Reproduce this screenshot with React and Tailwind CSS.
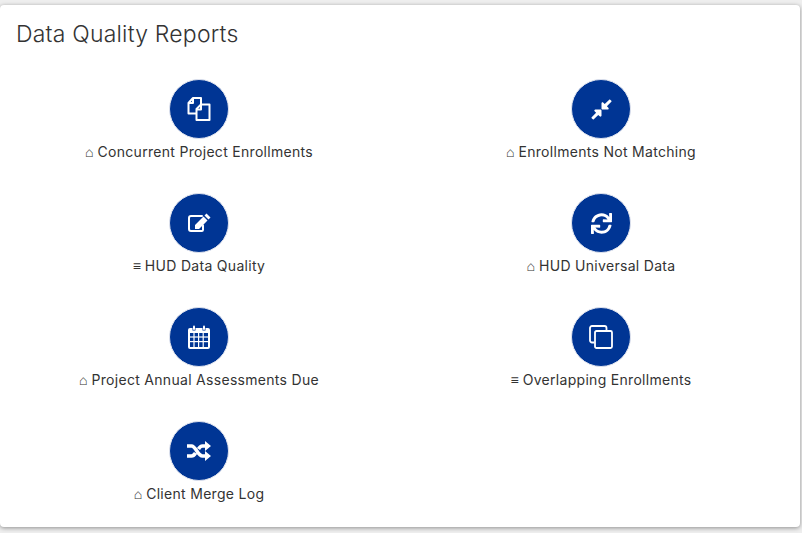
import React from 'react';
import { FaCompressAlt, FaSync } from 'react-icons/fa';

const FilesIcon = () => (
  <svg width="24" height="24" viewBox="0 0 24 24" fill="none" stroke="currentColor" strokeWidth="2" strokeLinejoin="round">
    <path d="M9 16.500H1.500V6L6 1h8v6" />
    <path d="M6 1.500V6H1.500" />
    <path d="M9.500 23V12L14 7.500h8.500V23z" />
    <path d="M14 8v4.500H9.500" />
  </svg>
);

const EditIcon = () => (
  <svg width="24" height="20" viewBox="0 0 24 20">
    <path d="M16 12.500v4.300a1.400 1.400 0 0 1-1.200 1.200H4a2 2 0 0 1-2-2V5a2 2 0 0 1 2-2h11" fill="none" stroke="currentColor" strokeWidth="2" strokeLinecap="round" />
    <path d="M19.500 0.500l4 4-2 2-4-4zM16.500 3.500l4 4-8.500 8.500H8v-4z" fill="currentColor" />
  </svg>
);

const CalendarIcon = () => (
  <svg width="22" height="24" viewBox="0 0 22 24">
    <path fill="currentColor" d="M2 3h2.500v2.500h3V3h7v2.500h3V3H20a2 2 0 0 1 2 2v17a2 2 0 0 1-2 2H2a2 2 0 0 1-2-2V5a2 2 0 0 1 2-2z" />
    <rect x="5" y="0.500" width="2" height="4.500" rx="1" fill="currentColor" />
    <rect x="15" y="0.500" width="2" height="4.500" rx="1" fill="currentColor" />
    <g fill="#003594">
      <rect x="2" y="8" width="3.400" height="3.400" />
      <rect x="6.600" y="8" width="3.400" height="3.400" />
      <rect x="11.200" y="8" width="3.400" height="3.400" />
      <rect x="15.800" y="8" width="4.200" height="3.400" />
      <rect x="2" y="12.600" width="3.400" height="3.400" />
      <rect x="6.600" y="12.600" width="3.400" height="3.400" />
      <rect x="11.200" y="12.600" width="3.400" height="3.400" />
      <rect x="15.800" y="12.600" width="4.200" height="3.400" />
      <rect x="2" y="17.200" width="3.400" height="4.800" />
      <rect x="6.600" y="17.200" width="3.400" height="4.800" />
      <rect x="11.200" y="17.200" width="3.400" height="4.800" />
      <rect x="15.800" y="17.200" width="4.200" height="4.800" />
    </g>
  </svg>
);

const CloneIcon = () => (
  <svg width="24" height="24" viewBox="0 0 24 24" fill="none" stroke="currentColor" strokeWidth="1.800">
    <path d="M5.500 17.500H3a2 2 0 0 1-2-2V3a2 2 0 0 1 2-2h12.500a2 2 0 0 1 2 2v2.500" />
    <rect x="6" y="6" width="17" height="17" rx="1.500" />
  </svg>
);

const RandomIcon = () => (
  <svg width="24" height="20" viewBox="0 0 24 20">
    <path d="M0 5h4.500c4.500 0 6 10 11 10H19M0 15h4.500c1.800 0 3-1.400 4-3M11.500 8c1-1.700 2.200-3 4-3H19" fill="none" stroke="currentColor" strokeWidth="3.600" />
    <path d="M18 0l6 5-6 5zM18 10l6 5-6 5z" fill="currentColor" />
  </svg>
);

const reports = [
  { name: 'Concurrent Project Enrollments', mark: '⌂', icon: <FilesIcon /> },
  { name: 'Enrollments Not Matching', mark: '⌂', icon: <FaCompressAlt className="text-[23px]" /> },
  { name: 'HUD Data Quality', mark: '≡', icon: <EditIcon /> },
  { name: 'HUD Universal Data', mark: '⌂', icon: <FaSync className="text-[21px]" /> },
  { name: 'Project Annual Assessments Due', mark: '⌂', icon: <CalendarIcon /> },
  { name: 'Overlapping Enrollments', mark: '≡', icon: <CloneIcon /> },
  { name: 'Client Merge Log', mark: '⌂', icon: <RandomIcon /> },
];

function ReportLink({ name, mark, icon }) {
  return (
    <a href="#" className="flex h-[114px] flex-col items-center">
      <span className="flex h-[60px] w-[60px] items-center justify-center rounded-full border border-[#dfe3ee] bg-[#003594] text-white">
        {icon}
      </span>
      <span className="mt-[2px] flex items-center gap-[4px] text-[14px] leading-[21px] tracking-[0.3px] text-[#333]">
        <span className="text-[14px] tracking-normal">{mark}</span>
        {name}
      </span>
    </a>
  );
}

export default function App() {
  return (
    <div className="h-[533px] overflow-hidden bg-[#eeeeee] pt-[5px] pr-[2px] font-['Inter','Liberation_Sans',sans-serif]">
      <div className="h-[522px] rounded-[4px] bg-white shadow-[0_1px_4px_rgba(0,0,0,0.4)]">
        <h2 className="pl-4 pt-[14px] text-[23px] leading-[30px] font-light tracking-[0.2px] text-[#333]">Data Quality Reports</h2>
        <div className="mt-[30px] grid grid-cols-2 gap-x-1">
          {reports.map((r) => (
            <ReportLink key={r.name} {...r} />
          ))}
        </div>
      </div>
    </div>
  );
}
